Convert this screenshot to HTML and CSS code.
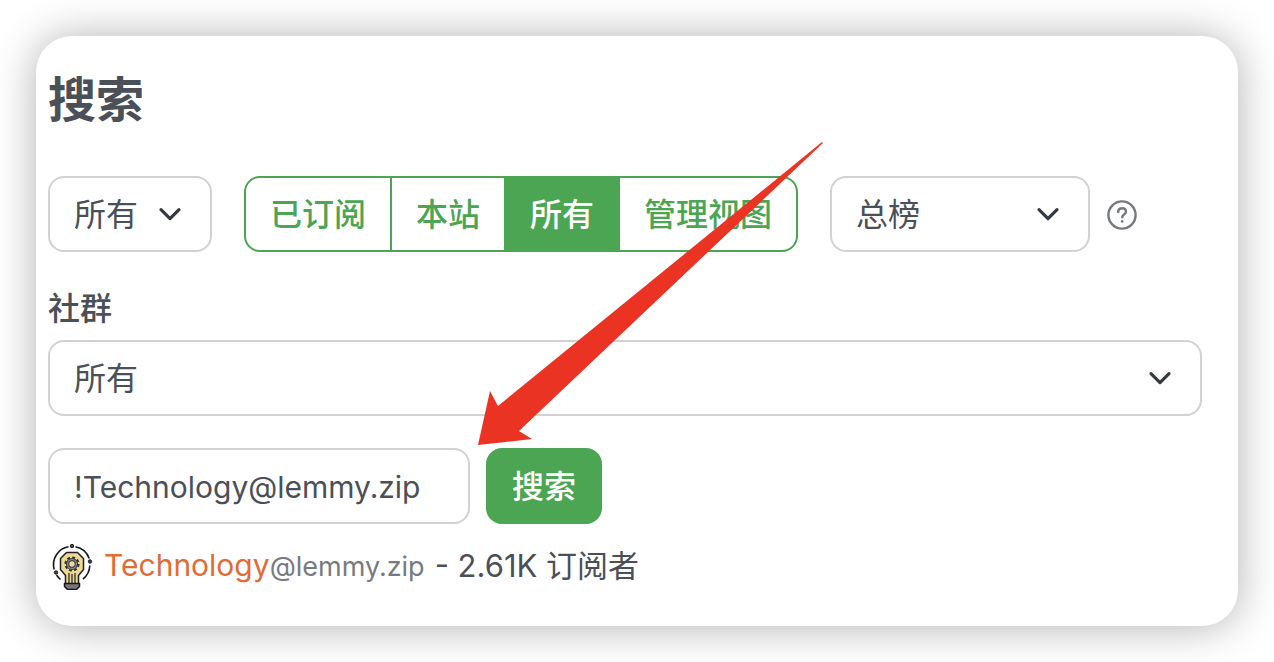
FILE: index.html
```html
<!DOCTYPE html>
<html lang="zh-CN">
<head>
<meta charset="utf-8">
<meta name="viewport" content="width=device-width, initial-scale=1">
<title>搜索</title>
<link rel="stylesheet" href="styles.css">
</head>
<body>
<main class="card">
  <h1 class="title">搜索</h1>
  <form class="search">
    <div class="filters">
      <select class="select select-type" aria-label="类型"><option>所有</option></select>
      <div class="group" role="radiogroup" aria-label="范围">
        <label class="segment"><input class="radio" type="radio" name="scope">已订阅</label>
        <label class="segment"><input class="radio" type="radio" name="scope">本站</label>
        <label class="segment"><input class="radio" type="radio" name="scope" checked>所有</label>
        <label class="segment"><input class="radio" type="radio" name="scope">管理视图</label>
      </div>
      <div class="sort">
        <select class="select select-sort" aria-label="排序"><option>总榜</option></select>
        <a class="help" href="#" aria-label="排序帮助">
          <svg class="help-icon" viewBox="0 0 32 32" aria-hidden="true">
            <circle cx="16" cy="17" r="13.6"/>
            <path d="M12.200 14c0-2.300 1.700-3.700 3.900-3.700s3.900 1.400 3.900 3.500c0 2.800-3.800 2.600-3.800 5.400"/>
            <circle class="dot" cx="16.100" cy="23.400" r="1.300"/>
          </svg>
        </a>
      </div>
    </div>
    <label class="label" for="community">社群</label>
    <select class="select select-community" id="community"><option>所有</option></select>
    <div class="query">
      <input class="input" type="text" aria-label="搜索" value="!Technology@lemmy.zip">
      <button class="button" type="button">搜索</button>
    </div>
  </form>
  <div class="result">
    <a class="community" href="#">
      <svg class="avatar" viewBox="0 0 48 48" aria-hidden="true">
        <path d="M12.500 37.500A18 18 0 0 1 8.600 33M6.200 27.500A18 18 0 0 1 20.500 4.800M27.500 4.800A18 18 0 0 1 41.200 16.500M41.800 23.500A18 18 0 0 1 35 37" fill="none" stroke="#18181b" stroke-width="1.600"/>
        <path d="M18.500 10.500h11l6 6v11l-5 6v8.500h-13v-8.500l-5-6v-11z" fill="#ecd994" stroke="#222226" stroke-width="1.500"/>
        <path d="M21 31v10M24 32v9M27 31v10" stroke="#302b28" stroke-width="1.300"/>
        <circle cx="24" cy="22" r="6.600" fill="none" stroke="#343438" stroke-width="2" stroke-dasharray="3 2.180"/>
        <circle cx="24" cy="22" r="4.400" fill="none" stroke="#343438" stroke-width="3.400"/>
        <circle cx="24" cy="22" r="4.400" fill="none" stroke="#828287" stroke-width="1.500"/>
        <circle cx="24" cy="22" r="2.300" fill="#ecd994"/>
        <g fill="#45454a" stroke="#18181b">
          <circle cx="24" cy="4" r="1.700"/><circle cx="42" cy="19.500" r="1.700"/><circle cx="8" cy="30.500" r="1.700"/>
        </g>
        <path d="M16.500 41.500h15v3l-3 3h-9l-3-3z" fill="#77777c" stroke="#18181b" stroke-width="1.500"/>
      </svg>
      <span class="name">Technology<span class="host">@lemmy.zip</span></span>
    </a>
    <span class="count">- 2.61K 订阅者</span>
  </div>
  <svg class="arrow" viewBox="0 0 346 304" aria-hidden="true">
    <path d="M0 303 12 249 20 264 344 0 345 1 41 289 54 297z"/>
  </svg>
</main>
</body>
</html>
```

FILE: styles.css
```css
:root {
  --text: #4b5057;
  --green: #4ca552;
  --border: #d2d2d2;
}

* {
  box-sizing: border-box;
}

body {
  margin: 0;
  padding: 36px;
  background: #fff;
  color: var(--text);
  font: 400 32px/48px Inter, "Noto Sans CJK SC", sans-serif;
}

.card {
  position: relative;
  padding: 36px 36px 35px 12px;
  border-radius: 36px;
  background: #fff;
  box-shadow: 0 1px 44px rgba(0, 0, 0, 0.31);
}

.title {
  margin: 0 0 48px;
  font-size: 48px;
  line-height: 56px;
  font-weight: 700;
}

.filters {
  display: flex;
  flex-wrap: wrap;
  align-items: center;
  gap: 32px;
}

.select,
.input,
.button {
  height: 76px;
  border: 2px solid var(--border);
  border-radius: 16px;
  color: inherit;
  font: inherit;
}

.select {
  appearance: none;
  padding: 2px 72px 0 24px;
  background: #fff url("data:image/svg+xml,%3Csvg xmlns='http://www.w3.org/2000/svg' viewBox='0 0 16 16'%3E%3Cpath fill='none' stroke='%23343a40' stroke-linecap='round' stroke-linejoin='round' stroke-width='1.6' d='m3.500 5.800 4.500 4.500 4.500-4.500'/%3E%3C/svg%3E") no-repeat right 24px center / 32px 32px;
}

.select-type {
  width: 164px;
}

.select-sort {
  width: 260px;
}

.select-community {
  display: block;
  width: 100%;
}

.group {
  display: flex;
}

.segment {
  height: 76px;
  padding: 13px 24px 11px;
  border: 2px solid var(--green);
  color: var(--green);
  font-weight: 500;
  cursor: pointer;
}

.segment + .segment {
  margin-left: -2px;
}

.segment:first-child {
  border-radius: 16px 0 0 16px;
}

.segment:last-child {
  border-radius: 0 16px 16px 0;
}

.segment:has(:checked) {
  background: var(--green);
  color: #fff;
}

.radio {
  position: absolute;
  appearance: none;
  margin: 0;
}

.sort {
  display: flex;
  align-items: center;
  gap: 16px;
}

.help {
  display: flex;
}

.help-icon {
  width: 32px;
  height: 32px;
  fill: none;
  stroke: #757a80;
  stroke-width: 2.400;
  stroke-linecap: round;
}

.dot {
  fill: #757a80;
  stroke: none;
}

.label {
  display: block;
  margin: 33px 0 7px;
  font-weight: 500;
}

.query {
  display: flex;
  gap: 16px;
  margin-top: 32px;
}

.input {
  width: 422px;
  padding: 2px 24px 0;
  background: #fff;
  font-size: 30px;
}

.button {
  padding: 2px 24px 0;
  border-color: var(--green);
  background: var(--green);
  color: #fff;
  font-weight: 500;
}

.result {
  display: flex;
  align-items: center;
  gap: 10px;
  margin-top: 17px;
}

.community {
  display: flex;
  align-items: center;
  gap: 8px;
  color: #df6d35;
  text-decoration: none;
}

.avatar {
  width: 48px;
  height: 48px;
}

.name {
  font-size: 30px;
}

.host {
  color: #777b81;
  font-size: 27px;
}

.count {
  font-size: 31px;
}

.arrow {
  position: absolute;
  left: 442px;
  top: 106px;
  width: 346px;
  height: 304px;
  fill: #eb3323;
  pointer-events: none;
}
```
